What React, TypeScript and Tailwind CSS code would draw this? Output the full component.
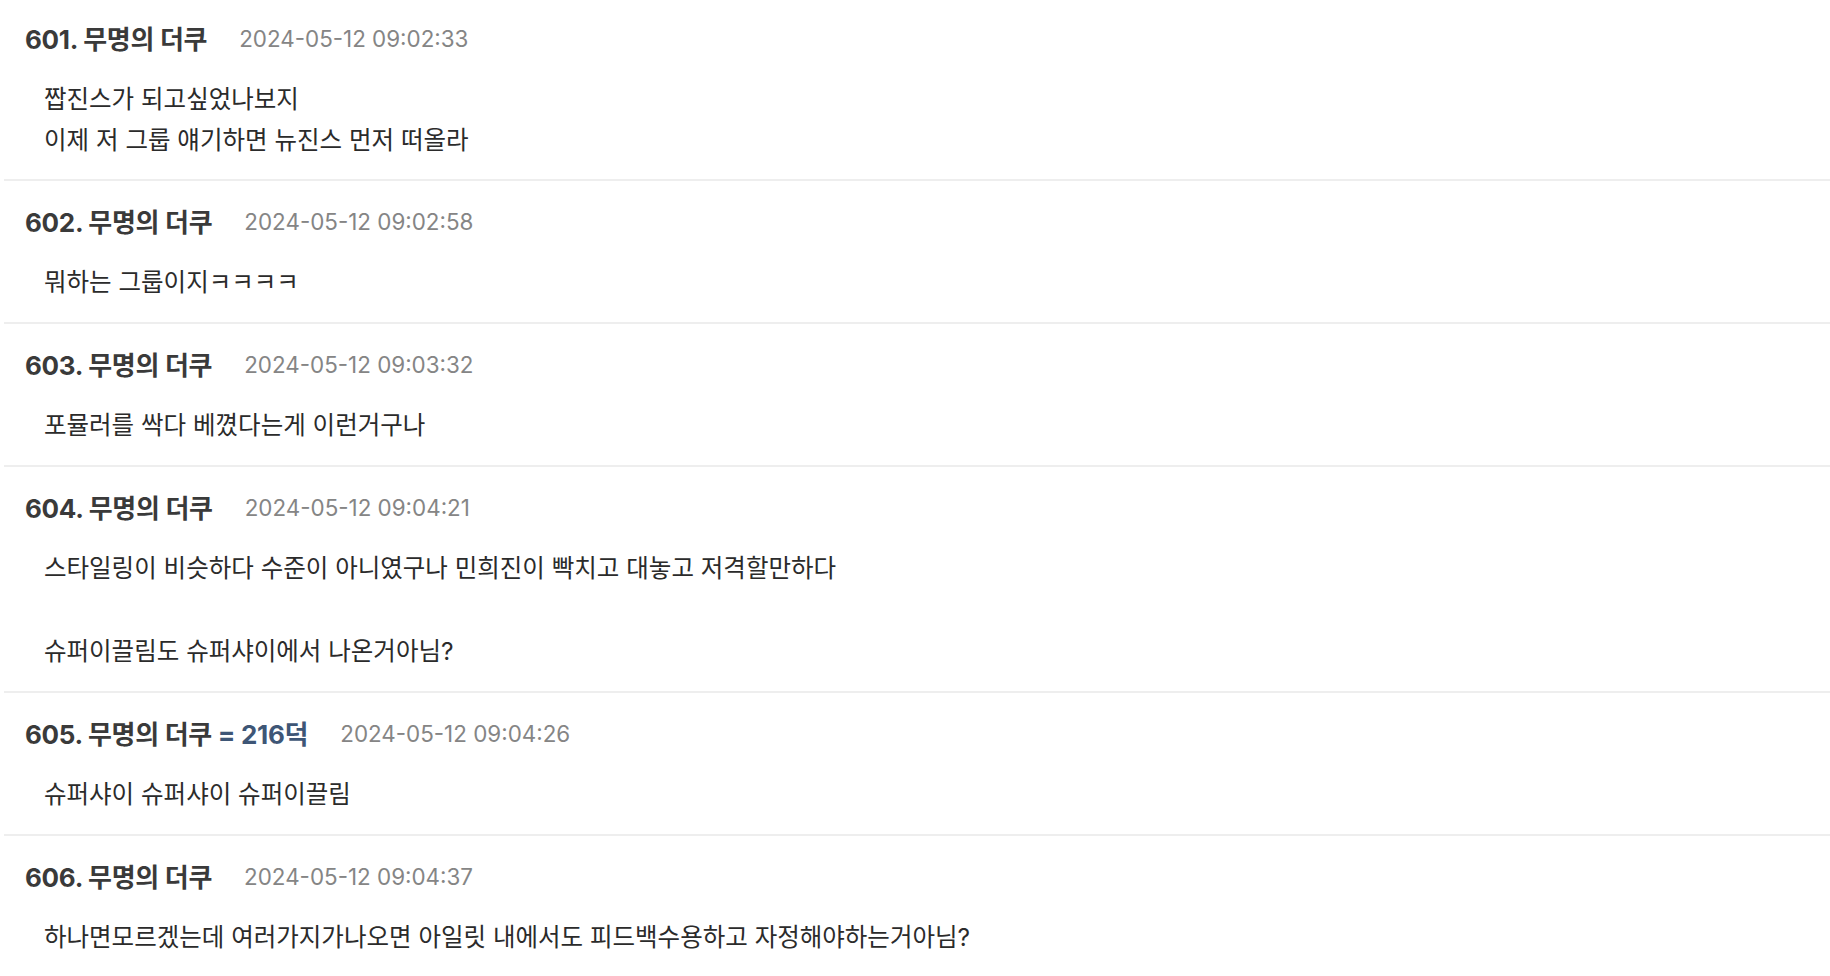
import React from "react";

interface Reply {
	no: number;
	name: string;
	point?: string;
	date: string;
	lines: string[];
}

const replies: Reply[] = [
	{
		no: 601,
		name: "무명의 더쿠",
		date: "2024-05-12 09:02:33",
		lines: ["짭진스가 되고싶었나보지", "이제 저 그룹 얘기하면 뉴진스 먼저 떠올라"],
	},
	{
		no: 602,
		name: "무명의 더쿠",
		date: "2024-05-12 09:02:58",
		lines: ["뭐하는 그룹이지ㅋㅋㅋㅋ"],
	},
	{
		no: 603,
		name: "무명의 더쿠",
		date: "2024-05-12 09:03:32",
		lines: ["포뮬러를 싹다 베꼈다는게 이런거구나"],
	},
	{
		no: 604,
		name: "무명의 더쿠",
		date: "2024-05-12 09:04:21",
		lines: [
			"스타일링이 비슷하다 수준이 아니였구나 민희진이 빡치고 대놓고 저격할만하다",
			"",
			"슈퍼이끌림도 슈퍼샤이에서 나온거아님?",
		],
	},
	{
		no: 605,
		name: "무명의 더쿠",
		point: "= 216덕",
		date: "2024-05-12 09:04:26",
		lines: ["슈퍼샤이 슈퍼샤이 슈퍼이끌림"],
	},
	{
		no: 606,
		name: "무명의 더쿠",
		date: "2024-05-12 09:04:37",
		lines: ["하나면모르겠는데 여러가지가나오면 아일릿 내에서도 피드백수용하고 자정해야하는거아님?"],
	},
];

function ReplyItem({ reply }: { reply: Reply }) {
	return (
		<li className="ml-[4px] border-b-2 border-[#eeeeee] pt-[23px] pb-[19px] first:pt-[21px] first:pb-[18px]">
			<div className="flex items-center pl-[21px] h-[36px]">
				<span className="text-[26px] font-bold text-[#3a3a3a] tracking-[-0.3px]">
					{reply.no}. {reply.name}
					{reply.point && <span className="text-[#3e5676]"> {reply.point}</span>}
				</span>
				<span className="ml-[32px] text-[22.4px] text-[#858585]">{reply.date}</span>
			</div>
			<div className="mt-[22px] pl-[40px] text-[24.5px] leading-[41px] text-[#2b2b2b]">
				{reply.lines.map((line, i) =>
					line ? (
						<p key={i} className="h-[41px] whitespace-nowrap">
							{line}
						</p>
					) : (
						<div key={i} className="h-[42px]" />
					),
				)}
			</div>
		</li>
	);
}

export default function App() {
	return (
		<div
			className="min-h-screen bg-white"
			style={{ fontFamily: '"Inter", "Noto Sans CJK KR", sans-serif' }}
		>
			<ul>
				{replies.map((reply) => (
					<ReplyItem key={reply.no} reply={reply} />
				))}
			</ul>
		</div>
	);
}
